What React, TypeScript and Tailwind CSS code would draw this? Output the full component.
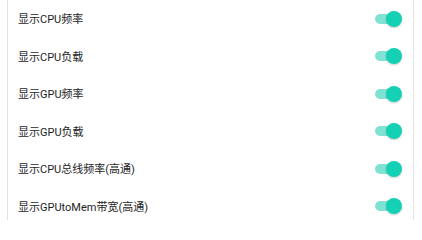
import React from "react";

const items = [
  "显示CPU频率",
  "显示CPU负载",
  "显示GPU频率",
  "显示GPU负载",
  "显示CPU总线频率(高通)",
  "显示GPUtoMem带宽(高通)",
];

const Toggle: React.FC = () => (
  <div className="relative w-[27px] h-[16px] flex items-center">
    <div className="w-[22px] h-[10px] rounded-full bg-[#80e2d3]" />
    <div className="absolute right-0 top-0 w-[16px] h-[16px] rounded-full bg-[#14d1b5] shadow-[0_1px_2px_rgba(0,0,0,0.2)]" />
  </div>
);

export default function App() {
  return (
    <div className="w-[422px] h-[220px] bg-white overflow-hidden" style={{ fontFamily: 'Roboto, "Noto Sans CJK SC", sans-serif' }}>
      <div className="ml-[7px] w-[407px] h-full border-x border-[#e2e2e2]">
        {items.map((label) => (
          <div key={label} className="h-[37.5px] flex items-center justify-between pl-[10px] pr-[11px]">
            <span className="pt-[3px] text-[11px] text-[#1e1e1e]">{label}</span>
            <Toggle />
          </div>
        ))}
      </div>
    </div>
  );
}
